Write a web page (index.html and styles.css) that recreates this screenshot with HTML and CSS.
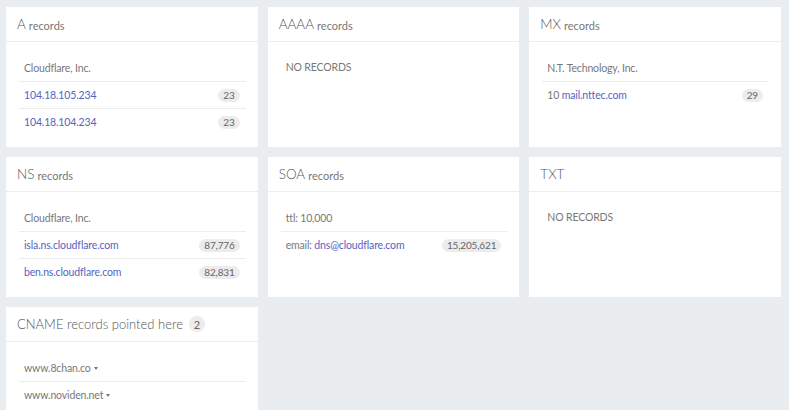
FILE: index.html
```html
<!DOCTYPE html>
<html lang="en">
  <head>
    <meta charset="utf-8" />
    <title>DNS records</title>
    <link rel="stylesheet" href="styles.css">
  </head>
  <body>
    <div class="cards">
      <section class="card">
        <h2 class="card-title">A <small>records</small></h2>
        <div class="card-body">
          <ul class="rec-group">
            <li class="group-name">Cloudflare, Inc.</li>
            <li><a href="#">104.18.105.234</a><span class="badge">23</span></li>
            <li><a href="#">104.18.104.234</a><span class="badge">23</span></li>
          </ul>
        </div>
      </section>

      <section class="card">
        <h2 class="card-title">AAAA <small>records</small></h2>
        <div class="card-body">
          <p class="empty">NO RECORDS</p>
        </div>
      </section>

      <section class="card">
        <h2 class="card-title">MX <small>records</small></h2>
        <div class="card-body">
          <ul class="rec-group">
            <li class="group-name">N.T. Technology, Inc.</li>
            <li><span>10 <a href="#">mail.nttec.com</a></span><span class="badge">29</span></li>
          </ul>
        </div>
      </section>

      <section class="card">
        <h2 class="card-title">NS <small>records</small></h2>
        <div class="card-body">
          <ul class="rec-group">
            <li class="group-name">Cloudflare, Inc.</li>
            <li><a href="#">isla.ns.cloudflare.com</a><span class="badge">87,776</span></li>
            <li><a href="#">ben.ns.cloudflare.com</a><span class="badge">82,831</span></li>
          </ul>
        </div>
      </section>

      <section class="card">
        <h2 class="card-title">SOA <small>records</small></h2>
        <div class="card-body">
          <ul class="rec-group">
            <li class="group-name">ttl: 10,000</li>
            <li><span>email: <a href="#">dns@cloudflare.com</a></span><span class="badge">15,205,621</span></li>
          </ul>
        </div>
      </section>

      <section class="card">
        <h2 class="card-title">TXT</h2>
        <div class="card-body">
          <p class="empty">NO RECORDS</p>
        </div>
      </section>

      <section class="card">
        <h2 class="card-title card-title-plain">CNAME records pointed here <span class="count">2</span></h2>
        <div class="card-body">
          <ul class="rec-group">
            <li class="group-name">www.8chan.co <span class="caret"></span></li>
            <li class="group-name">www.noviden.net <span class="caret"></span></li>
          </ul>
        </div>
      </section>
    </div>
  </body>
</html>
```

FILE: styles.css
```css
:root {
  --bg: #eaedf0;
  --text: #787878;
  --link: #5563c1;
  --line: #ececec;
}

* {
  box-sizing: border-box;
}

html,
body {
  margin: 0;
  padding: 0;
}

body {
  font-family: Lato, "Open Sans", sans-serif;
  font-size: 10.5px;
  letter-spacing: -0.15px;
  color: var(--text);
  background: var(--bg);
  overflow: hidden;
  height: 410px;
}

.cards {
  display: grid;
  grid-template-columns: repeat(3, 1fr);
  grid-auto-rows: 140px;
  gap: 10px;
  padding: 7px 8px 0 6px;
}

.card {
  background: #fff;
}

.card-title {
  margin: 0;
  height: 35px;
  padding: 0 11px;
  display: flex;
  align-items: center;
  gap: 3px;
  font-size: 13.5px;
  font-weight: 300;
  letter-spacing: 0;
  color: #555;
  border-bottom: 1px solid var(--line);
}
.card-title small {
  font-size: 11px;
  font-weight: 400;
  color: #777;
  padding-top: 2px;
}
.card-title-plain {
  font-size: 13px;
  gap: 6px;
}

.count {
  display: inline-flex;
  align-items: center;
  justify-content: center;
  width: 16px;
  height: 16px;
  border-radius: 50%;
  background: #ececec;
  font-size: 11px;
  font-weight: 400;
  color: #666;
}

.card-body {
  padding: 13px 12px 0 13px;
}

.empty {
  margin: 0;
  padding: 6px 5px;
  line-height: 13px;
}

.rec-group {
  list-style: none;
  margin: 0;
  padding: 0;
}
.rec-group li {
  box-sizing: content-box;
  display: flex;
  align-items: center;
  justify-content: space-between;
  height: 26px;
  padding: 0 6px 0 5px;
  border-top: 1px solid var(--line);
}
.rec-group li:first-child {
  border-top: 0;
}
.rec-group .group-name {
  justify-content: flex-start;
  gap: 3px;
}

a {
  color: var(--link);
  text-decoration: none;
}

.badge {
  background: #ececec;
  color: #666;
  font-size: 10px;
  line-height: 13px;
  padding: 0 5px;
  border-radius: 7px;
}

.caret {
  width: 0;
  height: 0;
  border-left: 2.5px solid transparent;
  border-right: 2.5px solid transparent;
  border-top: 3px solid #777;
}
```
